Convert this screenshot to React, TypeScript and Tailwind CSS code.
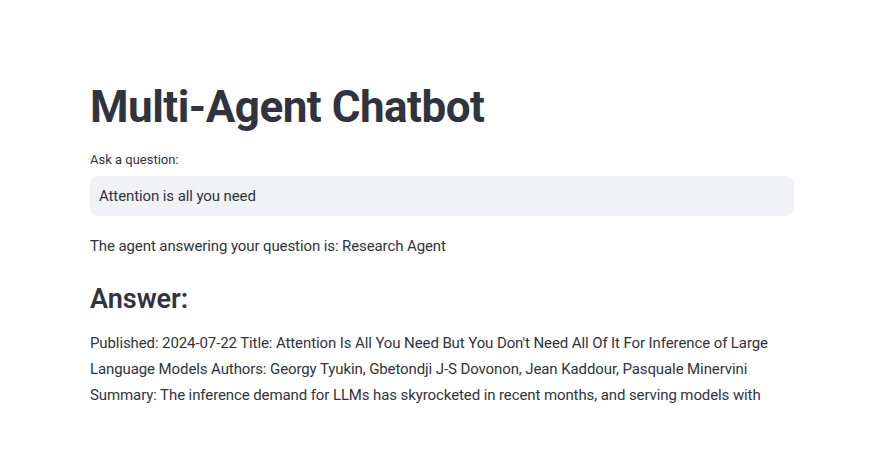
const ANSWER =
  "Published: 2024-07-22 Title: Attention Is All You Need But You Don't Need All Of It For Inference of Large Language Models Authors: Georgy Tyukin, Gbetondji J-S Dovonon, Jean Kaddour, Pasquale Minervini Summary: The inference demand for LLMs has skyrocketed in recent months, and serving models with"

export default function App() {
  return (
    <div className="min-h-[465px] bg-white text-[#31333f] font-['Roboto',sans-serif]">
      <div className="w-[704px] ml-[90px] pt-[76px]">
        <h1 className="text-[44px] font-bold leading-[1.2] tracking-[-0.5px] py-[5px]">Multi-Agent Chatbot</h1>
        <label className="block mt-[11px] text-[13px] leading-[20px]">Ask a question:</label>
        <div className="mt-[6px] h-[40px] rounded-[8px] bg-[#f0f2f6] px-[9px] flex items-center text-[15px] tracking-[-0.1px]">
          Attention is all you need
        </div>
        <p className="mt-[17px] text-[15px] leading-[26px] tracking-[-0.1px]">The agent answering your question is: Research Agent</p>
        <h3 className="mt-[24px] text-[27px] font-semibold leading-[1.2]">Answer:</h3>
        <p className="mt-[15px] text-[15px] leading-[26px] tracking-[-0.1px]">{ANSWER}</p>
      </div>
    </div>
  )
}
